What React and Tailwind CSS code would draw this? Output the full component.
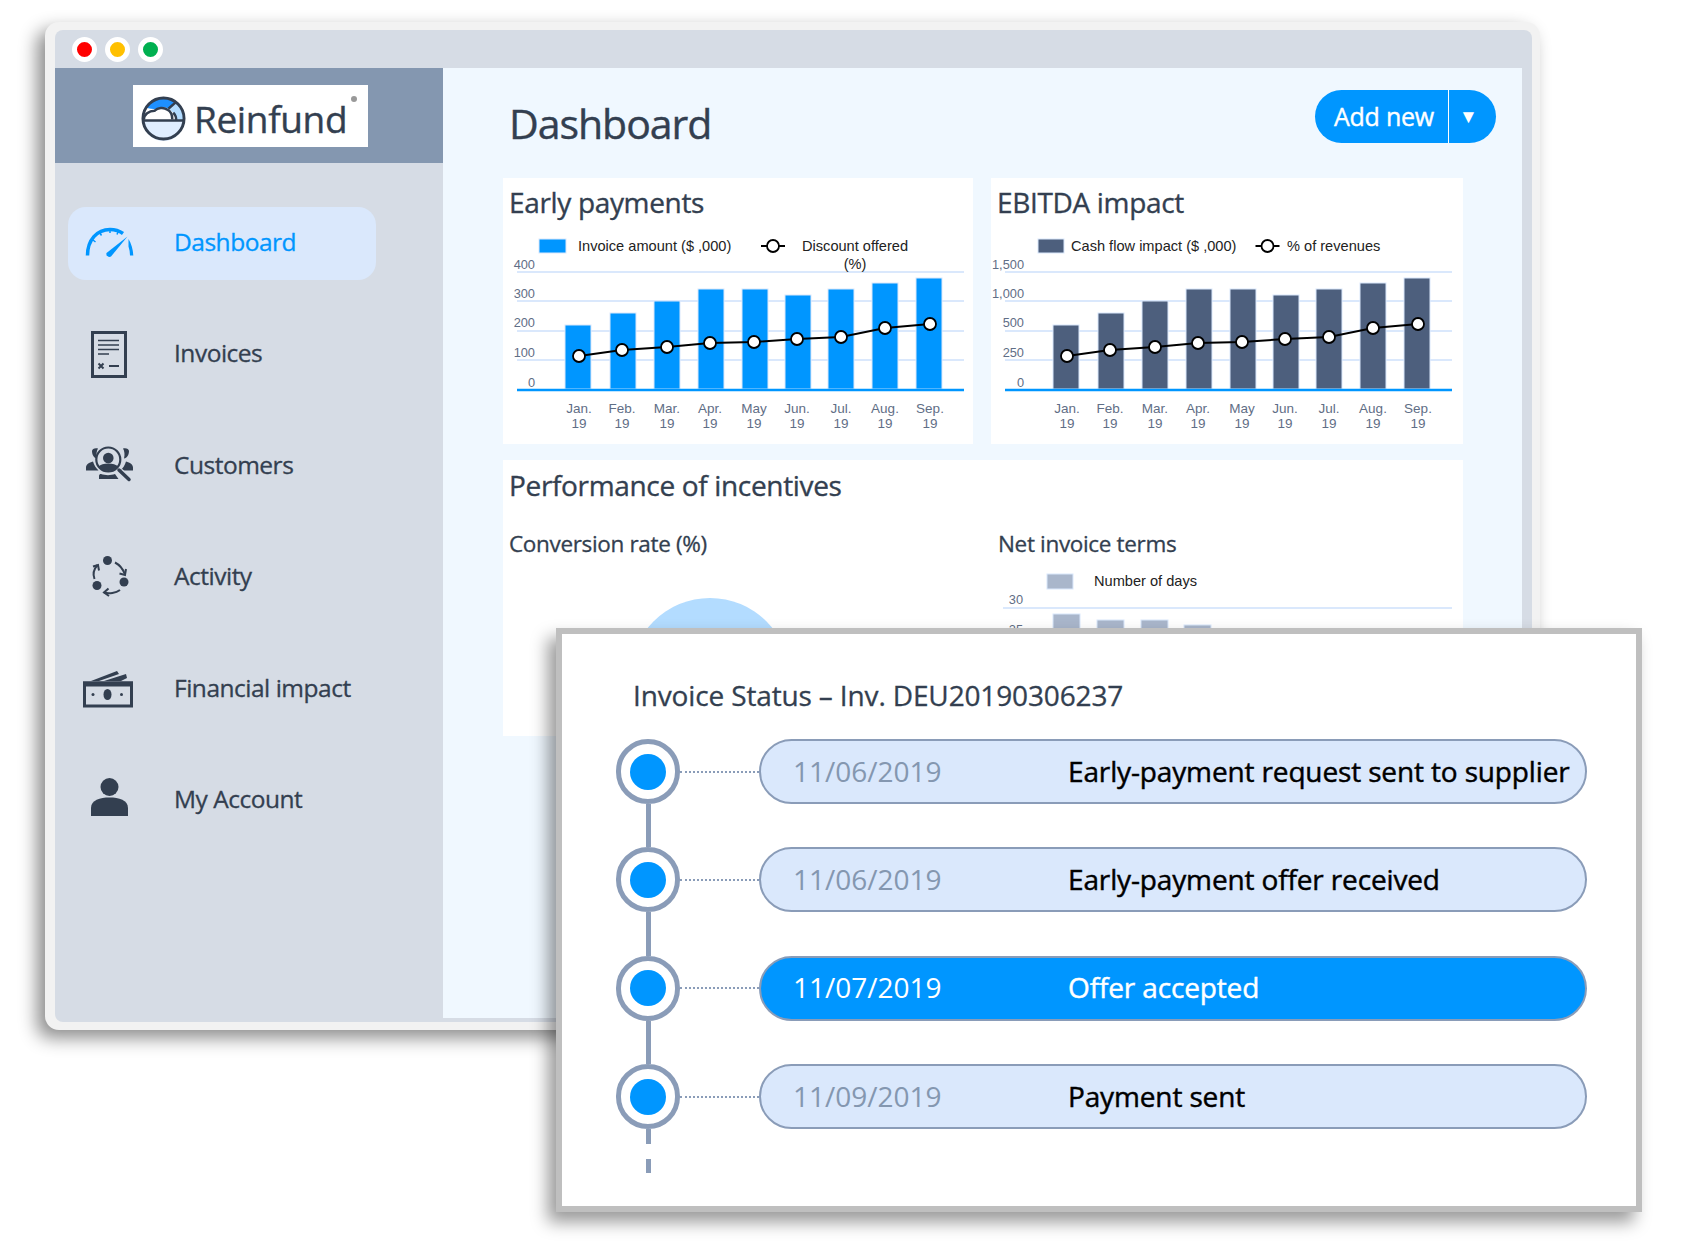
import React from 'react';

const navy = '#333f50';

const months = ['Jan.', 'Feb.', 'Mar.', 'Apr.', 'May', 'Jun.', 'Jul.', 'Aug.', 'Sep.'];
const bars = [
    [565, 325], [610, 313], [654, 301], [698, 289], [742, 289],
    [785, 295], [828, 289], [872, 283], [916, 278],
];
const points = [
    [579, 356], [622, 350], [667, 347], [710, 343], [754, 342],
    [797, 339], [841, 337], [885, 328], [930, 324],
];
const gridLines = [272, 301, 331, 360];
const tickY = [264, 293, 322, 352, 382];

const GaugeIcon = () => (
    <svg width="56" height="56" viewBox="0 0 56 56" fill="none">
        <path d="M5.500 39.500C5.500 24 15 13.500 28 13.500c5.500 0 9.500 1.500 13 4" stroke="#0096ff" strokeWidth="3.500" />
        <path d="M46.500 23c2.700 4.500 4.500 10 4.800 16.500h-3.300c0-3-.5-6-1.500-9z" fill="#0096ff" />
        <path d="M24.500 37 45.500 20.500 29 40.500c-2 1.500-5.500-1-4.500-3.500z" fill="#0096ff" />
        <path d="M11 24l2.500 2M18 17l1.500 2.500M28 14v3M36 16l-1 2.500" stroke="#0096ff" strokeWidth="1.500" />
    </svg>
);

const InvoiceIcon = () => (
    <svg width="56" height="56" viewBox="0 0 56 56" fill="none" stroke={navy}>
        <rect x="10.500" y="5.500" width="33" height="44" strokeWidth="3" />
        <path d="M16 13.500h21M16 18h21M16 22.500h21M16 27h11" strokeWidth="1.700" />
        <path d="M16.500 36.500l5 5M21.500 36.500l-5 5" strokeWidth="2" />
        <path d="M27 39h10" strokeWidth="2" />
    </svg>
);

const CustomersIcon = () => (
    <svg width="56" height="56" viewBox="0 0 56 56" fill={navy}>
        <path d="M10 12c0-2 3-3.500 6-2.500-1.500 2.500-2 6-1 10-3 0-5-4-5-7.500z" />
        <path d="M47 12c0-2-3-3.500-6-2.500 1.500 2.500 2 6 1 10 3 0 5-4 5-7.500z" />
        <path d="M4 31.500v-3c0-3 3-5 7-6 1 3.500 3 6.500 5.500 9z" />
        <path d="M51 31.500v-3c0-3-3-5-7-6-1 3.500-3 6.500-5.500 9z" />
        <path d="M17 40v-3c0-1.500 1-2 2-2 4 1.500 10 1.500 14 0l3.500 5z" />
        <circle cx="26.300" cy="20.500" r="12" fill="#d6dce5" stroke={navy} strokeWidth="2.200" />
        <circle cx="26.300" cy="19" r="5.300" />
        <path d="M16.500 27.500c2-2 5.500-3 9.800-3s7.800 1 9.800 3c-4 6-15.600 6-19.600 0z" />
        <path d="M38 32l9 8.500" stroke="#d6dce5" strokeWidth="6" />
        <path d="M37 31l10 9.500" stroke={navy} strokeWidth="3.500" strokeLinecap="round" />
    </svg>
);

const ActivityIcon = () => (
    <svg width="56" height="56" viewBox="0 0 56 56" fill="none" stroke={navy} strokeWidth="2">
        <g fill={navy} stroke="none">
            <circle cx="25.500" cy="10.500" r="4.500" />
            <circle cx="42" cy="32" r="4.500" />
            <circle cx="15" cy="35.500" r="4.500" />
        </g>
        <path d="M33 12.500C38 15 41 19 43 24.500" />
        <path d="M37.500 23.500l5.500 1.500 1-6" />
        <path d="M38 40c-4 3-11 4-16 2.500" />
        <path d="M26.500 38.500l-4.500 4 5 3.500" />
        <path d="M12.500 29c-2-5-.5-10 3-14" />
        <path d="M11 16.500l5-1.500 1 5.500" />
    </svg>
);

const MoneyIcon = () => (
    <svg width="56" height="56" viewBox="0 -2 56 56" fill={navy}>
        <path d="M9 17l26-10 2 3-20 7z" />
        <path d="M22 17l22-7 1 4-6 3z" />
        <rect x="2.500" y="19" width="47" height="23" fill="none" stroke={navy} strokeWidth="3" />
        <rect x="1" y="17.500" width="50" height="5" />
        <ellipse cx="25.500" cy="30.500" rx="4" ry="5.500" />
        <circle cx="11" cy="30.500" r="1.500" />
        <circle cx="39.500" cy="30.500" r="1.500" />
    </svg>
);

const PersonIcon = () => (
    <svg width="56" height="56" viewBox="0 1 56 56" fill={navy}>
        <circle cx="27.500" cy="15" r="9" />
        <path d="M9 44V36C9 28 18 25.500 27.500 25.500S46 28 46 36V44Z" />
    </svg>
);

const LogoMark = () => (
    <svg width="45" height="45" viewBox="0 0 46 46" fill="none">
        <circle cx="23" cy="23" r="21" fill="#fff" />
        <path d="M2 25h42a21 21 0 0 1-42 0z" fill="#e0eeff" />
        <path d="M5 12C10 5 16 2 23 2c5 0 9 1 13 4l-8 7c-5-3-9-2-12 1-4-1-8-1-11-2z" fill="#1e90ff" />
        <path d="M36 6c6 4 8 11 8 19H36c0-5-3-9-8-12z" fill="#b3dcff" />
        <path d="M3 24c0-5 5-9 11-9 3-3 9-4 13-1 4 2 5 6 5 10" stroke={navy} strokeWidth="2.500" />
        <path d="M2 25h42M28 13l8-7M36 25c0-3-1-6-3-8" stroke={navy} strokeWidth="2.500" />
        <circle cx="23" cy="23" r="21" stroke={navy} strokeWidth="3" />
    </svg>
);

const navItems = [
    { label: 'Dashboard', icon: GaugeIcon, active: true },
    { label: 'Invoices', icon: InvoiceIcon },
    { label: 'Customers', icon: CustomersIcon },
    { label: 'Activity', icon: ActivityIcon },
    { label: 'Financial impact', icon: MoneyIcon },
    { label: 'My Account', icon: PersonIcon },
];

const BarChart = ({ color, ticks, width, legend }) => (
    <svg width={width} height="214" viewBox={`503 230 ${width} 214`} className="font-['Liberation_Sans']">
        {gridLines.map((y) => (
            <line key={y} x1={legend.gridX} x2="964" y1={y} y2={y} stroke="#dae8fc" strokeWidth="2" />
        ))}
        {bars.map(([x, top]) => (
            <rect key={x} x={x} y={top} width="26" height={389 - top} fill={color} stroke="#dae8fc" strokeWidth="1" />
        ))}
        <line x1={legend.gridX} x2="964" y1="390" y2="390" stroke="#0096ff" strokeWidth="2.500" />
        <polyline points={points.map((p) => p.join(',')).join(' ')} fill="none" stroke="#000" strokeWidth="2" />
        {points.map(([x, y]) => (
            <circle key={x} cx={x} cy={y} r="6" fill="#fff" stroke="#000" strokeWidth="1.800" />
        ))}
        {ticks.map((t, i) => (
            <text key={t} x={legend.tickX} y={tickY[i] + 5} textAnchor="end" fontSize="12.800" fill="#5f6e86">{t}</text>
        ))}
        {months.map((m, i) => (
            <g key={m} fontSize="13.500" fill="#5f6e86" textAnchor="middle">
                <text x={points[i][0]} y="413">{m}</text>
                <text x={points[i][0]} y="428">19</text>
            </g>
        ))}
        <rect x={legend.swatchX} y="239" width={legend.swatchW} height="14" fill={color} stroke="#dae8fc" />
        <text x={legend.textX} y="251" fontSize="14.600" fill="#222">{legend.text}</text>
        <line x1={legend.markX - 12} x2={legend.markX + 12} y1="246" y2="246" stroke="#000" strokeWidth="2" />
        <circle cx={legend.markX} cy="246" r="6" fill="#fff" stroke="#000" strokeWidth="1.800" />
        <text x={legend.text2X} y="251" fontSize="14.600" fill="#222">{legend.text2}</text>
        {legend.text3 && (
            <text x={legend.text3X} y="269" fontSize="14.600" fill="#222" textAnchor="middle">{legend.text3}</text>
        )}
    </svg>
);

const timeline = [
    { date: '11/06/2019', label: 'Early-payment request sent to supplier' },
    { date: '11/06/2019', label: 'Early-payment offer received' },
    { date: '11/07/2019', label: 'Offer accepted', active: true },
    { date: '11/09/2019', label: 'Payment sent', last: true },
];

const App = () => {
    return (
        <div className="relative w-[1695px] h-[1254px] overflow-hidden bg-white font-['Open_Sans',sans-serif] pt-[22px] pl-[45px]">
            {/* browser window */}
            <div className="w-[1495px] h-[1008px] rounded-[14px] bg-[#f2f2f2] pt-[8px] pb-[8px] pl-[10px] pr-[8px] shadow-[-8px_8px_18px_rgba(0,0,0,0.45)]">
                <div className="flex flex-col w-full h-full rounded-[8px] overflow-hidden bg-[#d6dce5]">
                    <div className="flex items-center gap-[8px] h-[38px] shrink-0 pl-[17px]">
                        <span className="w-[25px] h-[25px] rounded-full bg-[#ff0000] border-[5px] border-white" />
                        <span className="w-[25px] h-[25px] rounded-full bg-[#ffc000] border-[5px] border-white" />
                        <span className="w-[25px] h-[25px] rounded-full bg-[#00b050] border-[5px] border-white" />
                    </div>
                    <div className="flex flex-1 min-h-0 pr-[10px]">
                        <aside className="w-[388px] shrink-0">
                            <div className="flex items-center justify-center h-[95px] bg-[#8497b0]">
                                <div className="relative flex items-center w-[235px] h-[62px] bg-white pl-[8px] pt-[6px] ml-[3px]">
                                    <LogoMark />
                                    <span className="ml-[8px] text-[37px] leading-none text-[#333f50] tracking-[-0.01em] [-webkit-text-stroke:0.4px_#333f50]">Reinfund</span>
                                    <span className="absolute right-[11px] top-[11px] w-[6px] h-[6px] rounded-full bg-[#999999]" />
                                </div>
                            </div>
                            <nav className="flex flex-col gap-[38.500px] pt-[44px] pl-[13px]">
                                {navItems.map(({ label, icon: Icon, active }) => (
                                    <div key={label} className={`flex items-center w-[308px] h-[73px] rounded-[18px] pl-[14px] ${active ? 'bg-[#dae8fc] text-[#0096ff]' : 'text-[#333f50]'}`}>
                                        <div className="w-[92px] shrink-0"><Icon /></div>
                                        <span className="pb-[3px] text-[24.500px] tracking-[-0.02em] whitespace-nowrap [-webkit-text-stroke:0.3px]">{label}</span>
                                    </div>
                                ))}
                            </nav>
                        </aside>
                        <main className="flex-1 h-[950px] bg-[#f0f8ff] pl-[60px]">
                            <div className="flex justify-between h-[110px] pl-[6px] pr-[26px]">
                                <h1 className="text-[41px] leading-[110px] tracking-[-0.025em] text-[#333f50] [-webkit-text-stroke:0.4px]">Dashboard</h1>
                                <div className="flex items-center self-start mt-[22px] w-[181px] h-[53px] rounded-full bg-[#0096ff] text-white">
                                    <span className="w-[134px] border-r border-white h-full flex items-center pl-[19px] text-[25px] tracking-[-0.01em] whitespace-nowrap [-webkit-text-stroke:0.4px]">Add new</span>
                                    <span className="flex-1 text-center pr-[8px] text-[19px]">▼</span>
                                </div>
                            </div>
                            <div className="flex gap-[18px]">
                                <section className="w-[470px] h-[266px] bg-white">
                                    <h2 className="h-[52px] pl-[6px] text-[28px] leading-[48px] tracking-[-0.012em] text-[#333f50] [-webkit-text-stroke:0.35px]">Early payments</h2>
                                    <BarChart
                                        color="#0096ff"
                                        ticks={['400', '300', '200', '100', '0']}
                                        width={470}
                                        legend={{
                                            gridX: 517, tickX: 535, swatchX: 539, swatchW: 27, textX: 578,
                                            text: 'Invoice amount ($ ,000)', markX: 773, text2X: 802,
                                            text2: 'Discount offered', text3: '(%)', text3X: 855,
                                        }}
                                    />
                                </section>
                                <section className="w-[472px] h-[266px] bg-white">
                                    <h2 className="h-[52px] pl-[6px] text-[28px] leading-[48px] tracking-[-0.012em] text-[#333f50] [-webkit-text-stroke:0.35px]">EBITDA impact</h2>
                                    <BarChart
                                        color="#4d5f7d"
                                        ticks={['1,500', '1,000', '500', '250', '0']}
                                        width={472}
                                        legend={{
                                            gridX: 517, tickX: 536, swatchX: 550, swatchW: 26, textX: 583,
                                            text: 'Cash flow impact ($ ,000)', markX: 779.5, text2X: 799,
                                            text2: '% of revenues',
                                        }}
                                    />
                                </section>
                            </div>
                            <section className="relative w-[960px] h-[276px] mt-[16px] bg-white overflow-hidden">
                                <h2 className="pl-[6px] pt-[3px] text-[28px] leading-[44px] tracking-[-0.012em] text-[#333f50] [-webkit-text-stroke:0.35px]">Performance of incentives</h2>
                                <div className="flex mt-[19px]">
                                    <div className="w-[491px] pl-[6px] text-[22.500px] leading-[36px] tracking-[-0.015em] text-[#333f50] [-webkit-text-stroke:0.3px]">
                                        Conversion rate (%)
                                        <div className="mt-[36px] ml-[121px] w-[160px] h-[160px] rounded-full bg-[#b3dcff]" />
                                    </div>
                                    <div className="flex-1">
                                        <div className="pl-[4px] text-[22.500px] leading-[36px] tracking-[-0.015em] text-[#333f50] [-webkit-text-stroke:0.3px]">Net invoice terms</div>
                                        <svg width="469" height="100" viewBox="1000 562 469 100" className="font-['Liberation_Sans']">
                                            <rect x="1053" y="574" width="26" height="15" fill="#a9b6cb" stroke="#dae8fc" />
                                            <text x="1100" y="586" fontSize="14.600" fill="#222">Number of days</text>
                                            <text x="1029" y="604" textAnchor="end" fontSize="12.800" fill="#5f6e86">30</text>
                                            <text x="1029" y="634" textAnchor="end" fontSize="12.800" fill="#5f6e86">25</text>
                                            <line x1="1009" x2="1458" y1="608" y2="608" stroke="#dae8fc" strokeWidth="2" />
                                            <g fill="#a9b6cb" stroke="#dae8fc">
                                                <rect x="1059" y="614" width="27" height="48" />
                                                <rect x="1103" y="620" width="27" height="42" />
                                                <rect x="1147" y="620" width="27" height="42" />
                                                <rect x="1190" y="625" width="27" height="37" />
                                            </g>
                                        </svg>
                                    </div>
                                </div>
                            </section>
                        </main>
                    </div>
                </div>
            </div>

            {/* invoice status popup */}
            <div className="absolute left-[556px] top-[628px] w-[1086px] h-[584px] bg-white border-[6px] border-[#bfbfbf] shadow-[-8px_10px_16px_rgba(0,0,0,0.4)]">
                <h3 className="pl-[71px] pt-[41px] text-[28px] leading-[40px] tracking-[-0.005em] text-[#333f50] whitespace-nowrap [-webkit-text-stroke:0.3px]">Invoice Status – Inv. DEU20190306237</h3>
                <div className="flex flex-col pl-[54px] pt-[24px]">
                    {timeline.map(({ date, label, active, last }) => (
                        <div key={label} className="flex h-[108.400px]">
                            <div className="flex flex-col items-center w-[64px] shrink-0">
                                <div className="flex items-center justify-center shrink-0 w-[64px] h-[65px] rounded-full bg-white border-[5px] border-[#8a9cb8]">
                                    <span className="w-[36px] h-[36px] rounded-full bg-[#0096ff]" />
                                </div>
                                <div className={`w-[5px] ${last ? 'h-[16px]' : 'flex-1'} bg-[#8a9cb8]`} />
                                {last && <div className="w-[5px] h-[15px] mt-[15px] bg-[#8a9cb8]" />}
                            </div>
                            <div className="w-[79px] h-[65px] flex items-center shrink-0">
                                <div className="w-full border-t-2 border-dotted border-[#8a9cb8]" />
                            </div>
                            <div className={`flex items-center w-[828px] h-[65px] rounded-[33px] border-2 border-[#8a9cb8] pl-[32px] pb-[2px] text-[28px] whitespace-nowrap ${active ? 'bg-[#0096ff] text-white' : 'bg-[#dae8fc] text-black'}`}>
                                <span className={`w-[275px] shrink-0 ${active ? '' : 'text-[#8497b0]'}`}>{date}</span>
                                <span className="tracking-[-0.005em] [-webkit-text-stroke:0.45px]">{label}</span>
                            </div>
                        </div>
                    ))}
                </div>
            </div>
        </div>
    );
};

export default App;
